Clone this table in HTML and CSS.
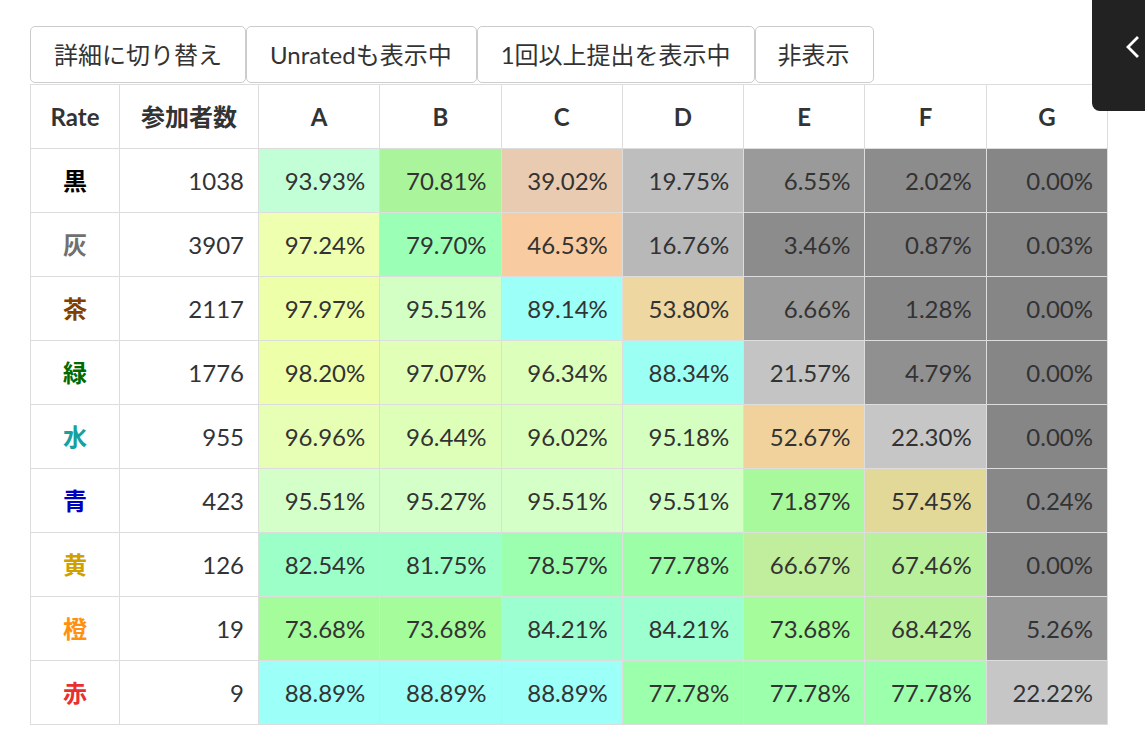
FILE: index.html
```html
<!DOCTYPE html>
<html lang="ja">
<head>
<meta charset="utf-8">
<title>Stats</title>
<link rel="stylesheet" href="styles.css">
</head>
<body>
<div class="page">
  <div class="toolbar">
    <button class="btn">詳細に切り替え</button>
    <button class="btn btn-wide">Unratedも表示中</button>
    <button class="btn">1回以上提出を表示中</button>
    <button class="btn btn-narrow">非表示</button>
  </div>
  <table class="stats">
    <colgroup>
      <col class="c-rate"><col class="c-count">
      <col><col><col><col><col><col><col>
    </colgroup>
    <thead>
      <tr><th>Rate</th><th>参加者数</th><th>A</th><th>B</th><th>C</th><th>D</th><th>E</th><th>F</th><th>G</th></tr>
    </thead>
    <tbody>
      <tr><th class="r-black">黒</th><td class="num">1038</td>
        <td style="background:#c2ffd6">93.93%</td><td style="background:#aaf59c">70.81%</td><td style="background:#e8cbb0">39.02%</td><td style="background:#bebebe">19.75%</td><td style="background:#9a9a9a">6.55%</td><td style="background:#8c8c8c">2.02%</td><td style="background:#868686">0.00%</td></tr>
      <tr><th class="r-gray">灰</th><td class="num">3907</td>
        <td style="background:#eeffb0">97.24%</td><td style="background:#9cffb6">79.70%</td><td style="background:#f8cca0">46.53%</td><td style="background:#b8b8b8">16.76%</td><td style="background:#8c8c8c">3.46%</td><td style="background:#888888">0.87%</td><td style="background:#868686">0.03%</td></tr>
      <tr><th class="r-brown">茶</th><td class="num">2117</td>
        <td style="background:#eeffaa">97.97%</td><td style="background:#d4ffc4">95.51%</td><td style="background:#9cfff8">89.14%</td><td style="background:#eed7a0">53.80%</td><td style="background:#9c9c9c">6.66%</td><td style="background:#898989">1.28%</td><td style="background:#868686">0.00%</td></tr>
      <tr><th class="r-green">緑</th><td class="num">1776</td>
        <td style="background:#eeffaa">98.20%</td><td style="background:#e2ffb8">97.07%</td><td style="background:#dcffbc">96.34%</td><td style="background:#9cfff4">88.34%</td><td style="background:#c4c4c4">21.57%</td><td style="background:#909090">4.79%</td><td style="background:#868686">0.00%</td></tr>
      <tr><th class="r-cyan">水</th><td class="num">955</td>
        <td style="background:#e6ffb4">96.96%</td><td style="background:#deffb8">96.44%</td><td style="background:#daffbc">96.02%</td><td style="background:#d4ffc0">95.18%</td><td style="background:#f2d29c">52.67%</td><td style="background:#c6c6c6">22.30%</td><td style="background:#868686">0.00%</td></tr>
      <tr><th class="r-blue">青</th><td class="num">423</td>
        <td style="background:#d4ffc8">95.51%</td><td style="background:#d4ffc8">95.27%</td><td style="background:#d4ffc6">95.51%</td><td style="background:#d4ffc4">95.51%</td><td style="background:#a8f89c">71.87%</td><td style="background:#e2d898">57.45%</td><td style="background:#888888">0.24%</td></tr>
      <tr><th class="r-yellow">黄</th><td class="num">126</td>
        <td style="background:#9cffc8">82.54%</td><td style="background:#9cffc8">81.75%</td><td style="background:#9cffb0">78.57%</td><td style="background:#9cffa8">77.78%</td><td style="background:#c0ee9c">66.67%</td><td style="background:#b8f09c">67.46%</td><td style="background:#868686">0.00%</td></tr>
      <tr><th class="r-orange">橙</th><td class="num">19</td>
        <td style="background:#a4fc9a">73.68%</td><td style="background:#a4fc9a">73.68%</td><td style="background:#9cffd0">84.21%</td><td style="background:#9cffd0">84.21%</td><td style="background:#a4fc9a">73.68%</td><td style="background:#b8f09c">68.42%</td><td style="background:#969696">5.26%</td></tr>
      <tr><th class="r-red">赤</th><td class="num">9</td>
        <td style="background:#9cfff8">88.89%</td><td style="background:#9cfff8">88.89%</td><td style="background:#9cfff8">88.89%</td><td style="background:#9cffac">77.78%</td><td style="background:#9cffac">77.78%</td><td style="background:#9cffac">77.78%</td><td style="background:#c6c6c6">22.22%</td></tr>
    </tbody>
  </table>
</div>
<div class="side-tab">
  <svg width="16" height="22" viewBox="0 0 16 22"><polyline points="12,2 3,11 12,20" fill="none" stroke="#fff" stroke-width="2.8" stroke-linecap="square"/></svg>
</div>
</body>
</html>
```

FILE: styles.css
```css
html, body {
  margin: 0;
  padding: 0;
  background: #fff;
}
body {
  font-family: Lato, "Noto Sans CJK JP", sans-serif;
  color: #333;
  font-size: 24px;
}
.page {
  padding: 26px 0 0 30px;
}
.toolbar {
  display: flex;
  gap: 0;
  margin-bottom: 1px;
}
.btn {
  font-family: Lato, "Noto Sans CJK JP", sans-serif;
  font-size: 24px;
  line-height: 35px;
  color: #333;
  background: #fff;
  border: 1px solid #ccc;
  border-radius: 5px;
  padding: 10px 23px;
  margin: 0;
}
.btn-wide {
  padding: 10px 24px 10px 23px;
}
.btn-narrow {
  padding: 10px 23px 10px 22px;
}
.stats {
  border-collapse: collapse;
  table-layout: fixed;
  width: 1078px;
  border: 1px solid #ddd;
}
.c-rate { width: 89px; }
.c-count { width: 139px; }
.stats th, .stats td {
  border: 1px solid #ddd;
  padding: 15px 14px;
  line-height: 33px;
  height: 33px;
  white-space: nowrap;
}
.stats thead th {
  font-weight: bold;
  text-align: center;
}
.stats tbody th {
  font-weight: bold;
  text-align: center;
}
.stats td {
  text-align: right;
}
.r-black { color: #000; }
.r-gray { color: #707070; }
.r-brown { color: #804000; }
.r-green { color: #006a00; }
.r-cyan { color: #1a9fa0; }
.r-blue { color: #0000c0; }
.r-yellow { color: #d0a000; }
.r-orange { color: #ff9010; }
.r-red { color: #e83030; }
.side-tab {
  position: fixed;
  top: 0;
  right: 0;
  width: 53px;
  height: 111px;
  background: #222;
  border-bottom-left-radius: 8px;
  display: flex;
  justify-content: flex-end;
  padding-top: 36px;
  padding-right: 4px;
  box-sizing: border-box;
}
.side-tab svg {
  display: block;
}
```
